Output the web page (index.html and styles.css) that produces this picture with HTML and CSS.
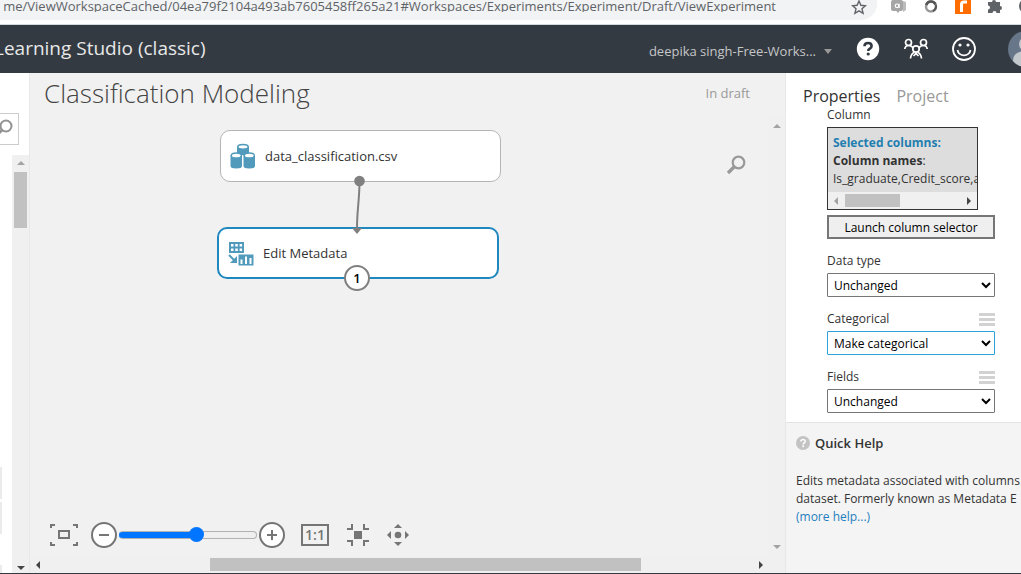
FILE: index.html
```html
<!DOCTYPE html>
<html lang="en">
<head>
    <meta charset="utf-8">
    <title>Classification Modeling - Learning Studio (classic)</title>
    <link rel="stylesheet" href="styles.css">
</head>
<body>
<div class="browser-bar">
    <div class="address">
        <div class="url-clip">
            <input class="url" type="text" aria-label="Address" value="me/ViewWorkspaceCached/04ea79f2104a493ab7605458ff265a21#Workspaces/Experiments/Experiment/Draft/ViewExperiment" />
        </div>
        <button class="icon-button" type="button" aria-label="Bookmark">
            <svg width="16" height="16" viewBox="0 0 16 16"><path d="M8 1l1.900 4.300 4.600.4-3.500 3.100 1.100 4.500L8 10.900l-4.100 2.400L5 8.800 1.500 5.700l4.600-.4z" fill="none" stroke="#5f6368" stroke-width="1.400"/></svg>
        </button>
    </div>
    <div class="extensions">
        <svg width="18" height="18" viewBox="0 0 18 18"><path d="M13 1l3 1v8l-3 2z" fill="#bbb"/><path d="M3 0h8q2 0 2 2v7q0 2-2 2h-1.500L8 13l-1.500-2H3q-2 0-2-2V2q0-2 2-2z" fill="#a5a5a5"/><circle cx="7" cy="5.800" r="1.800" fill="none" stroke="#fff" stroke-width="1.200"/><path d="M9.200 3.800v4.200" stroke="#fff"/></svg>
        <svg width="16" height="18" viewBox="0 0 16 18"><circle cx="8" cy="6.500" r="5" fill="#fff" stroke="#999" stroke-width="2.500"/><path d="M3.200 5A5 5 0 0 1 12.500 4.500" fill="none" stroke="#555" stroke-width="2.500"/><path d="M12.800 5q1 4-3 6" fill="none" stroke="#555" stroke-width="2"/></svg>
        <svg width="16" height="18" viewBox="0 0 16 18"><path d="M0 0h16v14H0z" fill="#ff6d00"/><path d="M6.500 12V4.500q0-2.500 2.500-2.500h3" fill="none" stroke="#fff" stroke-width="3"/></svg>
        <svg width="16" height="18" viewBox="0 0 16 18"><path d="M1 2h4a2 2 0 0 1 4 0h4v4a2 2 0 0 1 0 4v3H9.500a2 2 0 0 0-4 0H1v-3.500a2 2 0 0 0 0-4z" fill="#5f6368"/></svg>
        <svg width="16" height="18" viewBox="0 0 16 18"><circle cx="8" cy="6" r="8" fill="#5f6368"/></svg>
    </div>
</div>

<header class="app-header">
    <h1 class="brand">Learning Studio (classic)</h1>
    <button class="workspace" type="button">deepika singh-Free-Works... <span class="caret"></span></button>
    <button class="icon-button" type="button" aria-label="Help">
        <svg width="24" height="24" viewBox="0 0 24 24"><circle cx="12" cy="12" r="11.200" fill="#fff"/><path d="M8.500 9.300q0-3.300 3.600-3.300 3.500 0 3.500 3 0 1.600-1.700 2.700-1.700 1-1.700 2.300" fill="none" stroke="#343a41" stroke-width="2.600"/><circle cx="12.200" cy="17" r="1.600" fill="#343a41"/></svg>
    </button>
    <button class="icon-button" type="button" aria-label="Community">
        <svg width="24" height="24" viewBox="0 0 24 24" fill="none" stroke="#fff" stroke-width="1.700"><circle cx="4.500" cy="5.500" r="3"/><circle cx="19.500" cy="5.500" r="3"/><circle cx="12" cy="12" r="3.200"/><path d="M.8 12q.5-3.500 3.700-3.500 2.500 0 4.600 2.200M23.200 12q-.5-3.500-3.700-3.500-2.500 0-4.600 2.200M6.500 21.500q.5-5 4-6.300M17.500 21.500q-.5-5-4-6.300M9.500 19l2.500-2.500 2.500 2.500"/></svg>
    </button>
    <button class="icon-button" type="button" aria-label="Feedback">
        <svg width="24" height="24" viewBox="0 0 24 24"><circle cx="12" cy="12" r="11" fill="none" stroke="#fff" stroke-width="1.800"/><circle cx="8" cy="8" r="1.600" fill="#fff"/><circle cx="16" cy="8" r="1.600" fill="#fff"/><path d="M5.500 13a6.600 6.600 0 0 0 13 0" fill="none" stroke="#fff" stroke-width="1.800"/></svg>
    </button>
    <div class="avatar">
        <svg width="36" height="36" viewBox="0 0 36 36"><circle cx="18" cy="18" r="18" fill="#68768a"/><circle cx="18" cy="13" r="7" fill="#c3c8cd"/><path d="M5 30q0-10 13-10t13 10q-5 6-13 6T5 30z" fill="#c3c8cd"/></svg>
    </div>
</header>

<main class="workspace-area">
    <aside class="palette">
        <button class="palette-search" type="button" aria-label="Search items">
            <svg width="18" height="18" viewBox="0 0 18 18" fill="none" stroke="#929292"><circle cx="11" cy="7" r="5.500" stroke-width="2"/><path d="M7.500 10.500L1 17" stroke-width="3"/></svg>
        </button>
        <div class="palette-body">
            <div class="palette-list">
                <div class="palette-item"></div>
                <div class="palette-item"></div>
                <div class="palette-item last"></div>
            </div>
            <div class="scroll-y">
                <span class="arrow up muted"></span>
                <span class="thumb-y"></span>
                <span class="arrow down"></span>
            </div>
        </div>
    </aside>

    <section class="experiment">
        <div class="experiment-head">
            <h2 class="experiment-title">Classification Modeling</h2>
            <span class="status">In draft</span>
        </div>
        <div class="experiment-body">
            <div class="stage">
                <div class="node dataset">
                    <svg width="26" height="26" viewBox="0 0 26 26" fill="#519abc"><path d="M7 3.500v7q6 3.500 12 0v-7z"/><ellipse cx="13" cy="3.800" rx="5.200" ry="2.400" fill="#fff" stroke="#519abc" stroke-width="1.500"/><path d="M.5 12v11q0 2.500 5.800 2.500T12 23V12zM13.500 12v11q0 2.500 5.800 2.500T25 23V12z"/><ellipse cx="6.300" cy="12.500" rx="5" ry="2.500" fill="#fff" stroke="#519abc" stroke-width="1.300"/><ellipse cx="19.300" cy="12.500" rx="5" ry="2.500" fill="#fff" stroke="#519abc" stroke-width="1.300"/></svg>
                    <span>data_classification.csv</span>
                </div>
                <div class="node module">
                    <svg width="26" height="26" viewBox="0 0 26 26"><path d="M1 2h15v11H1z" fill="#519abc"/><path d="M3 4h2.500v2.500H3zM7.300 4h2.500v2.500H7.300zM11.600 4h2.500v2.500h-2.500zM3 8.500h2.500V11H3zM7.300 8.500h2.500V11H7.300zM11.600 8.500h2.500V11h-2.500z" fill="#fff"/><path d="M1 15l6 6" stroke="#519abc" stroke-width="2"/><path d="M9 16v7H2z" fill="#519abc"/><path d="M10.500 14.500h15v11h-15z" fill="#519abc"/><path d="M12.500 19.500h2V24h-2zM17 16.500h2V24h-2zM21.500 18h2v6h-2z" fill="#fff"/></svg>
                    <span>Edit Metadata</span>
                </div>
                <svg class="link" width="20" height="62" viewBox="0 0 20 62"><path d="M12.500 6C12.500 25 10 35 10 53" fill="none" stroke="#808080" stroke-width="2"/><circle cx="12.500" cy="6" r="5.300" fill="#808080"/><path d="M5 53h10l-5 6z" fill="#808080"/></svg>
                <span class="port">1</span>
                <button class="icon-button stage-search" type="button" aria-label="Search experiment">
                    <svg width="20" height="20" viewBox="0 0 20 20" fill="none" stroke="#999"><circle cx="12.500" cy="7.500" r="5.800" stroke-width="2.200"/><path d="M8.500 11.500L2 18" stroke-width="3.400"/></svg>
                </button>

                <div class="zoom-bar">
                    <button class="icon-button" type="button" aria-label="Zoom to fit">
                        <svg width="28" height="24" viewBox="0 0 28 24" fill="none" stroke="#757575" stroke-width="2"><path d="M1 5V2h4M23 2h4v3M1 19v3h4M23 22h4v-3M9 8h10v7H9z"/></svg>
                    </button>
                    <div class="zoom-range">
                        <button class="icon-button" type="button" aria-label="Zoom out">
                            <svg width="26" height="26" viewBox="0 0 26 26"><circle cx="13" cy="13" r="12" fill="#fff" stroke="#757575" stroke-width="2"/><path d="M8 13h10" stroke="#757575" stroke-width="2"/></svg>
                        </button>
                        <input class="zoom" type="range" min="0" max="100" value="57" aria-label="Zoom" />
                        <button class="icon-button" type="button" aria-label="Zoom in">
                            <svg width="26" height="26" viewBox="0 0 26 26"><circle cx="13" cy="13" r="12" fill="#fff" stroke="#757575" stroke-width="2"/><path d="M8 13h10M13 8v10" stroke="#757575" stroke-width="2"/></svg>
                        </button>
                    </div>
                    <button class="actual-size" type="button">1:1</button>
                    <button class="icon-button" type="button" aria-label="Center">
                        <svg width="22" height="22" viewBox="0 0 22 22"><path d="M7 7h8v8H7z" fill="#757575"/><path d="M0 5h5V0M17 0v5h5M0 17h5v5M17 22v-5h5" fill="none" stroke="#757575" stroke-width="2"/></svg>
                    </button>
                    <button class="icon-button" type="button" aria-label="Pan">
                        <svg width="22" height="22" viewBox="0 0 22 22" fill="#757575"><circle cx="11" cy="11" r="3.300"/><path d="M11 0l4 4H7zM11 22l4-4H7zM0 11l4-4v8zM22 11l-4-4v8z"/></svg>
                    </button>
                </div>
            </div>
            <div class="scroll-y plain">
                <span class="arrow up muted"></span>
                <span class="arrow down muted"></span>
            </div>
        </div>
        <div class="scroll-x">
            <span class="arrow left"></span>
            <span class="thumb-x"></span>
            <span class="arrow right"></span>
        </div>
    </section>

    <aside class="properties">
        <nav class="tabs">
            <a class="active" href="#properties">Properties</a>
            <a href="#project">Project</a>
        </nav>
        <form class="fields">
            <div class="label-row"><span>Column</span></div>
            <div class="columns-box">
                <div class="columns-text">
                    <strong class="blue">Selected columns:</strong><br>
                    <strong>Column names</strong>:<br>
                    Is_graduate,Credit_score,a
                </div>
                <div class="scroll-x small">
                    <span class="arrow left muted"></span>
                    <span class="thumb-x"></span>
                    <span class="arrow right"></span>
                </div>
            </div>
            <button class="launch" type="button">Launch column selector</button>

            <div class="label-row"><label for="data-type">Data type</label></div>
            <select id="data-type"><option>Unchanged</option></select>

            <div class="label-row"><label for="categorical">Categorical</label><span class="bars"></span></div>
            <select id="categorical" class="selected"><option>Make categorical</option></select>

            <div class="label-row"><label for="fields">Fields</label><span class="bars"></span></div>
            <select id="fields"><option>Unchanged</option></select>
        </form>
        <div class="quick-help">
            <h3>
                <svg width="14" height="14" viewBox="0 0 14 14"><circle cx="7" cy="7" r="7" fill="#c3c3c3"/><path d="M4.900 5.500q0-2 2.200-2t2.100 1.800q0 1-1 1.600-1 .7-1 1.500" fill="none" stroke="#fff" stroke-width="1.500"/><circle cx="7.100" cy="10.300" r="1" fill="#fff"/></svg>
                Quick Help
            </h3>
            <p>Edits metadata associated with columns<br>dataset. Formerly known as Metadata E<br><a href="#help">(more help...)</a></p>
        </div>
    </aside>
</main>
</body>
</html>
```

FILE: styles.css
```css
* {
    box-sizing: border-box;
}
body {
    margin: 0;
    height: 100vh;
    display: flex;
    flex-direction: column;
    overflow: hidden;
    font-family: "Open Sans", "Noto Sans", sans-serif;
    font-size: 12px;
    line-height: 18px;
    color: #333;
    background: #fff;
    border-bottom: 1px solid #343a41;
}
button, input, select {
    font-family: inherit;
    font-size: inherit;
}
svg {
    display: block;
}
h1, h2, h3, p {
    margin: 0;
    font-weight: normal;
}
a {
    text-decoration: none;
}
.icon-button {
    padding: 0;
    border: 0;
    background: none;
}

/* browser bar */
.browser-bar {
    display: flex;
    height: 25px;
    flex: none;
    border-bottom: 1px solid #d5dade;
}
.address {
    flex: 1;
    min-width: 0;
    display: flex;
    align-items: flex-start;
    gap: 75px;
    height: 20px;
    padding-right: 10px;
    background: #f1f3f4;
    border-radius: 0 0 16px 0;
}
.url-clip {
    flex: 1;
    min-width: 0;
    display: flex;
    justify-content: flex-end;
    overflow: hidden;
}
.url {
    flex: none;
    width: calc(100% + 20px);
    height: 12px;
    padding: 0;
    border: 0;
    background: none;
    text-align: right;
    font-size: 13px;
    color: #5f6368;
}
.extensions {
    display: flex;
    gap: 16px;
    width: 144px;
    padding-left: 13px;
    overflow: hidden;
}
.extensions svg {
    flex: none;
}
.extensions svg:first-child {
    margin-right: -1px;
}

/* header */
.app-header {
    display: flex;
    align-items: center;
    gap: 24px;
    height: 48px;
    flex: none;
    overflow: hidden;
    background: #343a41;
}
.brand {
    flex: 1;
    margin-left: -6px;
    padding-bottom: 2px;
    font-size: 19px;
    line-height: 28px;
    color: #e8e8e8;
}
.workspace {
    display: flex;
    align-items: center;
    gap: 8px;
    padding: 4px 0 0;
    border: 0;
    background: none;
    font-size: 13px;
    color: #c4c6c8;
}
.caret {
    border: 4px solid transparent;
    border-top: 5px solid #999;
    border-bottom: 0;
}
.avatar {
    width: 13px;
    margin-left: 8px;
    overflow: hidden;
}

/* main area */
.workspace-area {
    flex: 1;
    min-height: 0;
    display: flex;
}
.palette {
    width: 29px;
    flex: none;
    display: flex;
    flex-direction: column;
    padding-top: 40px;
}
.palette-search {
    display: flex;
    justify-content: flex-end;
    width: 19px;
    height: 32px;
    padding: 5px 5px 0 0;
    overflow: hidden;
    border: 1px solid #ccc;
    border-left: 0;
    background: #fff;
}
.palette-search svg {
    flex: none;
}
.palette-body {
    flex: 1;
    display: flex;
    justify-content: space-between;
    margin-top: 10px;
}
.palette-list {
    display: flex;
    flex-direction: column;
    justify-content: flex-end;
    gap: 3px;
    width: 2px;
}
.palette-item {
    height: 32px;
    background: #ebebeb;
}
.palette-item.last {
    height: 8px;
    margin-top: 28px;
}

/* scroll bars */
.scroll-y {
    width: 17px;
    flex: none;
    display: flex;
    flex-direction: column;
    align-items: center;
    padding: 6px 0 3px;
    background: #f0f0f0;
}
.scroll-x {
    height: 17px;
    flex: none;
    display: flex;
    align-items: center;
    padding: 0 22px 0 6px;
    background: #f0f0f0;
}
.arrow {
    border: 4px solid transparent;
    color: #444;
}
.arrow.muted {
    color: #a3a3a3;
}
.arrow.up {
    border-top: 0;
    border-bottom-color: currentColor;
}
.arrow.down {
    margin-top: auto;
    border-bottom: 0;
    border-top-color: currentColor;
}
.arrow.left {
    border-left: 0;
    border-right-color: currentColor;
}
.arrow.right {
    margin-left: auto;
    border-right: 0;
    border-left-color: currentColor;
}
.thumb-y {
    width: 13px;
    height: 56px;
    margin-top: 7px;
    background: #c1c1c1;
}
.thumb-x {
    width: 431px;
    height: 13px;
    margin-left: 170px;
    background: #c1c1c1;
}

/* experiment canvas */
.experiment {
    flex: 1;
    min-width: 0;
    display: flex;
    flex-direction: column;
    background: #f1f1f1;
    border-left: 1px solid #e8e8e8;
    border-right: 1px solid #e8e8e8;
}
.experiment-head {
    display: flex;
    justify-content: space-between;
    height: 45px;
    padding: 4px 35px 0 14px;
}
.experiment-title {
    font-size: 26px;
    font-weight: 300;
    line-height: 32px;
    color: #444;
}
.status {
    font-size: 13px;
    line-height: 32px;
    color: #999;
}
.experiment-body {
    flex: 1;
    display: flex;
}
.scroll-y.plain {
    padding-bottom: 7px;
}
.stage {
    position: relative;
    flex: 1;
    display: flex;
    align-items: flex-end;
}
.node {
    position: absolute;
    display: flex;
    align-items: center;
    gap: 9px;
    width: 282px;
    height: 52px;
    padding-left: 9px;
    border-radius: 10px;
    background: #fff;
    font-size: 13px;
}
.node.dataset {
    left: 190px;
    top: 12px;
    width: 281px;
    border: 1px solid #b5b5b5;
}
.node.module {
    left: 187px;
    top: 109px;
    border: 2px solid #1f88be;
}
.link {
    position: absolute;
    left: 317px;
    top: 57px;
}
.port {
    position: absolute;
    left: 314px;
    top: 147px;
    width: 26px;
    height: 26px;
    border: 2px solid #808080;
    border-radius: 50%;
    background: #fff;
    color: #000;
    font-size: 13px;
    font-weight: 600;
    line-height: 22px;
    text-align: center;
}
.stage-search {
    position: absolute;
    right: 22px;
    top: 37px;
}
.zoom-bar {
    display: flex;
    align-items: center;
    gap: 18px;
    padding: 0 0 8px 20px;
}
.zoom-range {
    display: flex;
    align-items: center;
    gap: 2px;
    margin: 0 -2px 0 -5px;
}
.zoom {
    appearance: none;
    width: 138px;
    height: 16px;
    margin: 0;
    background: none;
}
.zoom::-webkit-slider-runnable-track {
    height: 8px;
    border: 1px solid #b2b2b2;
    border-radius: 4px;
    background: linear-gradient(to right, #0075ff 57%, #efefef 57%);
    background-origin: border-box;
    background-clip: border-box;
    border-left-color: #0075ff;
}
.zoom::-webkit-slider-thumb {
    appearance: none;
    width: 15px;
    height: 15px;
    margin-top: -5px;
    border-radius: 50%;
    background: #0075ff;
}
.actual-size {
    width: 28px;
    height: 22px;
    padding: 0;
    border: 2px solid #757575;
    background: none;
    color: #757575;
    font-weight: 600;
    font-size: 14px;
    line-height: 16px;
}

/* properties pane */
.properties {
    width: 235px;
    flex: none;
    display: flex;
    flex-direction: column;
    overflow: hidden;
    background: #fff;
}
.tabs {
    display: flex;
    gap: 16px;
    height: 32px;
    padding: 12px 0 0 17px;
    font-size: 16px;
    line-height: 22px;
}
.tabs a {
    color: #999;
}
.tabs a.active {
    color: #333;
}
.fields {
    display: flex;
    flex-direction: column;
    width: 209px;
    padding: 0 0 9px 41px;
}
.label-row {
    display: flex;
    align-items: center;
    justify-content: space-between;
    height: 18px;
    margin: 13px 0 3px;
}
.label-row:first-child {
    margin-top: 1px;
}
.bars {
    width: 16px;
    height: 13px;
    border-top: 3px solid #d2d2d2;
    border-bottom: 3px solid #d2d2d2;
    background: linear-gradient(#d2d2d2, #d2d2d2) center / 16px 3px no-repeat;
}
.columns-box {
    width: 151px;
    margin-bottom: 5px;
    border: 1px solid #333;
    background: #ddd;
    overflow: hidden;
}
.columns-text {
    padding: 6px 0 4px 5px;
    white-space: nowrap;
}
.blue {
    color: #1f7fb0;
}
.scroll-x.small {
    padding: 0 6px;
}
.small .thumb-x {
    width: 55px;
    margin-left: 7px;
}
.launch {
    height: 24px;
    padding: 0;
    border: 2px solid #767676;
    background: #efefef;
    color: #000;
}
.fields select {
    height: 24px;
    padding: 1px 2px 0;
    border: 1px solid #767676;
    border-radius: 1px;
    background-color: #fff;
    color: #000;
}
.fields select.selected {
    border-color: #2ea3d8;
}
.quick-help {
    flex: 1;
    padding: 11px 0 0 10px;
    border-top: 1px solid #e3e3e3;
    background: #f4f4f4;
    white-space: nowrap;
}
.quick-help h3 {
    display: flex;
    align-items: center;
    gap: 5px;
    margin-bottom: 20px;
    font-size: 13px;
    font-weight: 600;
}
.quick-help a {
    color: #1f7fc0;
}
```
